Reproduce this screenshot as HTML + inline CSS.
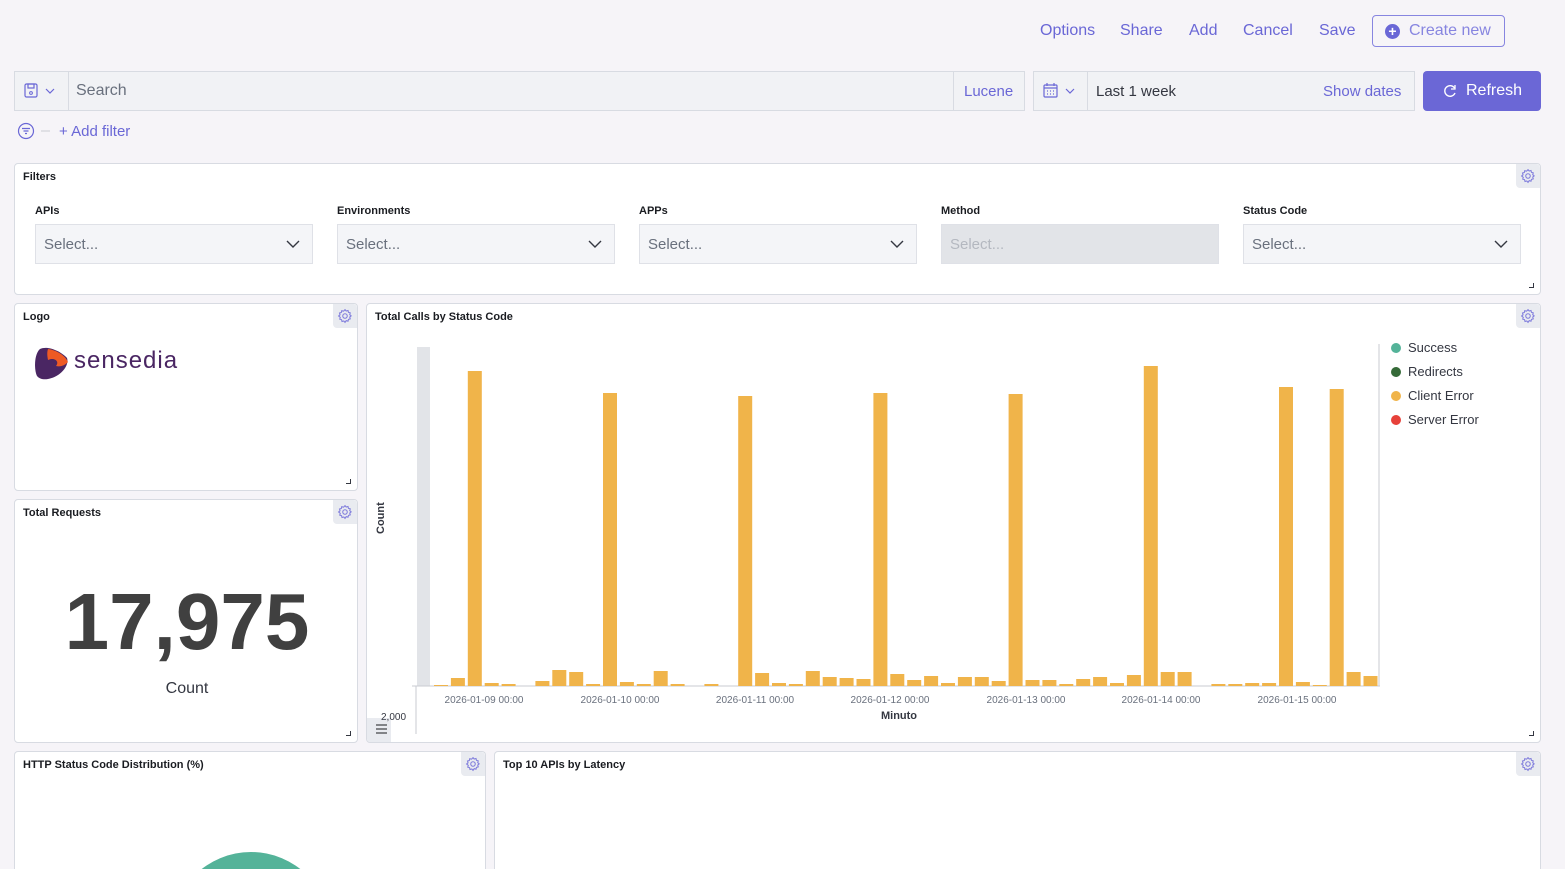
<!DOCTYPE html>
<html><head><meta charset="utf-8"><style>
*{box-sizing:border-box;margin:0;padding:0}
html{width:1565px;height:869px;overflow:hidden}
body{width:1565px;height:869px;overflow:hidden;background:#f6f4f8;font-family:"Liberation Sans",sans-serif;position:relative;color:#343741}
.a{position:absolute}
.lnk{color:#6a67d6;font-size:16px}
.panel{position:absolute;background:#fff;border:1px solid #d8dbe2;border-radius:4px;overflow:hidden}
.pt{position:absolute;left:8px;top:7px;font-size:11px;font-weight:bold;color:#1a1c21}
.gear{position:absolute;right:0;top:0;width:24px;height:24px;background:#e9ebf0;border-radius:0 4px 0 4px}
.rs{position:absolute;right:6px;bottom:6px;width:5px;height:5px;border-right:1px solid #343741;border-bottom:1px solid #343741}
.sel{position:absolute;top:60px;height:40px;width:278px;background:#f4f5f8;border:1px solid #dfe1e7;font-size:15px;color:#69707d;padding:11px 8px}
.lab{position:absolute;top:41px;font-size:11px;font-weight:bold;color:#1a1c21}
</style></head><body>
<svg width="0" height="0" style="position:absolute"><defs><symbol id="g" viewBox="0 0 24 24"><path fill="none" stroke="#7f7cdc" stroke-width="1.4" d="M12 3.5l1.6 1.9 2.4-.7.6 2.4 2.4.7-.7 2.4 1.9 1.6-1.9 1.6.7 2.4-2.4.7-.6 2.4-2.4-.7L12 20.5l-1.6-1.9-2.4.7-.6-2.4-2.4-.7.7-2.4L3.5 12l1.9-1.6-.7-2.4 2.4-.7.6-2.4 2.4.7z"/><circle cx="12" cy="12" r="3" fill="none" stroke="#7f7cdc" stroke-width="1.4"/></symbol></defs></svg>

<div class="a lnk" style="left:1040px;top:22px">Options</div>
<div class="a lnk" style="left:1120px;top:22px">Share</div>
<div class="a lnk" style="left:1189px;top:22px">Add</div>
<div class="a lnk" style="left:1243px;top:22px">Cancel</div>
<div class="a lnk" style="left:1319px;top:22px">Save</div>
<div class="a" style="left:1372px;top:15px;width:133px;height:32px;border:1px solid #8785e0;border-radius:4px;color:#8785e0;font-size:16px;padding:6px 0 0 36px">Create new<div class="a" style="left:12px;top:8px;width:15px;height:15px;border-radius:50%;background:#6a67d6;color:#fff;font-size:14px;line-height:14px;text-align:center;font-weight:bold">+</div></div>

<div class="a" style="left:14px;top:71px;width:1011px;height:40px;background:#f1f2f5;border:1px solid #d8dbe2"></div>
<div class="a" style="left:68px;top:72px;width:1px;height:38px;background:#d8dbe2"></div>
<div class="a" style="left:953px;top:72px;width:1px;height:38px;background:#d8dbe2"></div>
<svg class="a" style="left:24px;top:83px" width="36" height="16"><rect x="1" y="1" width="12" height="13" rx="1.5" fill="none" stroke="#6a67d6" stroke-width="1.2"/><rect x="4" y="1" width="6" height="4" fill="none" stroke="#6a67d6" stroke-width="1.2"/><circle cx="7" cy="10" r="1.4" fill="none" stroke="#6a67d6"/><path d="M22 6l4 4 4-4" fill="none" stroke="#6a67d6" stroke-width="1.2"/></svg>
<div class="a" style="left:76px;top:82px;font-size:16px;color:#69707d">Search</div>
<div class="a lnk" style="left:964px;top:83px;font-size:15px">Lucene</div>

<div class="a" style="left:1033px;top:71px;width:382px;height:40px;background:#f1f2f5;border:1px solid #d8dbe2"></div>
<div class="a" style="left:1087px;top:72px;width:1px;height:38px;background:#d8dbe2"></div>
<svg class="a" style="left:1043px;top:83px" width="36" height="16"><rect x="1" y="2" width="13" height="12" rx="1" fill="none" stroke="#6a67d6" stroke-width="1.2"/><path d="M1 5h13M4 0v3M11 0v3M4 8h1M7 8h1M10 8h1M4 11h1M7 11h1M10 11h1" stroke="#6a67d6" stroke-width="1.2"/><path d="M23 6l4 4 4-4" fill="none" stroke="#6a67d6" stroke-width="1.2"/></svg>
<div class="a" style="left:1096px;top:83px;font-size:15px;color:#343741">Last 1 week</div>
<div class="a lnk" style="left:1323px;top:83px;font-size:15px">Show dates</div>
<div class="a" style="left:1423px;top:71px;width:118px;height:40px;background:#6b67d6;border-radius:4px;color:#fff;font-size:16px;padding:11px 0 0 43px">Refresh</div>
<svg class="a" style="left:1443px;top:84px" width="14" height="14"><path d="M11.5 4A5.3 5.3 0 1 0 12 9" fill="none" stroke="#fff" stroke-width="1.4"/><path d="M12 1v4H8" fill="none" stroke="#fff" stroke-width="1.3"/></svg>

<svg class="a" style="left:17px;top:122px" width="40" height="18"><circle cx="9" cy="9" r="7.5" fill="none" stroke="#6a67d6" stroke-width="1.2"/><path d="M5 6.5h8M6.5 9h5M8 11.5h2" stroke="#6a67d6" stroke-width="1.2"/><path d="M24 9h9" stroke="#c9cbd2"/></svg>
<div class="a lnk" style="left:59px;top:123px;font-size:15px">+ Add filter</div>

<div class="panel" style="left:14px;top:163px;width:1527px;height:132px">
<div class="pt">Filters</div><div class="gear"><svg width="24" height="24"><use href="#g" x="3" y="3" width="18" height="18"/></svg></div><div class="rs"></div>
<div class="lab" style="left:20px">APIs</div><div class="lab" style="left:322px">Environments</div><div class="lab" style="left:624px">APPs</div><div class="lab" style="left:926px">Method</div><div class="lab" style="left:1228px">Status Code</div>
<div class="sel" style="left:20px">Select...<svg class="a" style="right:12px;top:14px" width="14" height="10"><path d="M1 2l6 6 6-6" fill="none" stroke="#343741" stroke-width="1.4"/></svg></div>
<div class="sel" style="left:322px">Select...<svg class="a" style="right:12px;top:14px" width="14" height="10"><path d="M1 2l6 6 6-6" fill="none" stroke="#343741" stroke-width="1.4"/></svg></div>
<div class="sel" style="left:624px">Select...<svg class="a" style="right:12px;top:14px" width="14" height="10"><path d="M1 2l6 6 6-6" fill="none" stroke="#343741" stroke-width="1.4"/></svg></div>
<div class="sel" style="left:926px;background:#e2e4e8;color:#b4b8c0">Select...</div>
<div class="sel" style="left:1228px">Select...<svg class="a" style="right:12px;top:14px" width="14" height="10"><path d="M1 2l6 6 6-6" fill="none" stroke="#343741" stroke-width="1.4"/></svg></div>
</div>

<div class="panel" style="left:14px;top:303px;width:344px;height:188px">
<div class="pt">Logo</div><div class="gear"><svg width="24" height="24"><use href="#g" x="3" y="3" width="18" height="18"/></svg></div><div class="rs"></div>
<svg class="a" style="left:19px;top:40px" width="36" height="38"><path d="M6 5C14 1 28 8 33 14 35 20 30 27 24 31 16 36 7 37 3 32 0 26 0 10 6 5z" fill="#4a2663"/><path d="M14 5C22 6 31 11 34 18 30 22 26 23 22 22 26 17 20 13 14 16 13 11 13 8 14 5z" fill="#ee5a24"/></svg>
<div class="a" style="left:59px;top:43px;font-size:24px;color:#4a2663;letter-spacing:1px">sensedia</div>
</div>

<div class="panel" style="left:14px;top:499px;width:344px;height:244px">
<div class="pt">Total Requests</div><div class="gear"><svg width="24" height="24"><use href="#g" x="3" y="3" width="18" height="18"/></svg></div><div class="rs"></div>
<div class="a" style="left:0;width:344px;top:76px;text-align:center;font-size:80px;font-weight:bold;color:#404040">17,975</div>
<div class="a" style="left:0;width:344px;top:180px;text-align:center;font-size:16px;color:#343741">Count</div>
</div>

<div class="panel" style="left:366px;top:303px;width:1175px;height:440px">
<div class="pt">Total Calls by Status Code</div><div class="gear"><svg width="24" height="24"><use href="#g" x="3" y="3" width="18" height="18"/></svg></div><div class="rs"></div>
<div class="a" style="left:0;top:414px;width:24px;height:25px;background:#e9ebf0"></div>
<svg class="a" style="left:0;top:0" width="1175" height="440" font-family="Liberation Sans" font-size="10" fill="#69707d">
<rect x="50" y="43" width="13" height="339" fill="#e2e4e8"/>
<path d="M45 382H1013M49 382V430M1012 40V382" stroke="#c9cbd2"/>
<text x="17" y="230" transform="rotate(-90 17 230)" font-weight="bold" fill="#343741" font-size="11">Count</text>
<text x="14" y="416" fill="#343741">2,000</text>
<path d="M9 421h11M9 425h11M9 429h11" stroke="#1a1c21"/>
<text x="532" y="415" font-weight="bold" fill="#343741" font-size="11" text-anchor="middle">Minuto</text>
<g text-anchor="middle"><text x="117" y="399">2026-01-09 00:00</text><text x="253" y="399">2026-01-10 00:00</text><text x="388" y="399">2026-01-11 00:00</text><text x="523" y="399">2026-01-12 00:00</text><text x="659" y="399">2026-01-13 00:00</text><text x="794" y="399">2026-01-14 00:00</text><text x="930" y="399">2026-01-15 00:00</text></g>
<g id="bars" fill="#f0b44a"></g>
<circle cx="1029" cy="44" r="5" fill="#54b399"/><text x="1041" y="48" font-size="13" fill="#343741">Success</text>
<circle cx="1029" cy="68" r="5" fill="#356a38"/><text x="1041" y="72" font-size="13" fill="#343741">Redirects</text>
<circle cx="1029" cy="92" r="5" fill="#f0b44a"/><text x="1041" y="96" font-size="13" fill="#343741">Client Error</text>
<circle cx="1029" cy="116" r="5" fill="#e7413a"/><text x="1041" y="120" font-size="13" fill="#343741">Server Error</text>
</svg>
</div>

<div class="panel" style="left:14px;top:751px;width:472px;height:118px;border-bottom:none;border-radius:4px 4px 0 0">
<div class="pt">HTTP Status Code Distribution (%)</div><div class="gear"><svg width="24" height="24"><use href="#g" x="3" y="3" width="18" height="18"/></svg></div>
<div class="a" style="left:156px;top:100px;width:160px;height:160px;border-radius:50%;background:#54b399"></div>
</div>
<div class="panel" style="left:494px;top:751px;width:1047px;height:118px;border-bottom:none;border-radius:4px 4px 0 0">
<div class="pt">Top 10 APIs by Latency</div><div class="gear"><svg width="24" height="24"><use href="#g" x="3" y="3" width="18" height="18"/></svg></div>
</div>

<script>
var t=[684,677,370,682,683,685,680,669,671,683,392,681,683,670,683,685,683,685,395,672,682,683,670,676,677,678,392,673,679,675,682,676,676,680,393,679,679,683,678,676,682,674,365,671,671,685,683,683,682,682,386,681,684,388,671,675];
var g=document.getElementById('bars'),s='';
t.forEach(function(y,i){var x=433-366+i*16.9;s+='<rect x="'+x.toFixed(1)+'" y="'+(y-303)+'" width="14" height="'+(685-y)+'"/>';});
g.innerHTML=s;
</script>
</body></html>
